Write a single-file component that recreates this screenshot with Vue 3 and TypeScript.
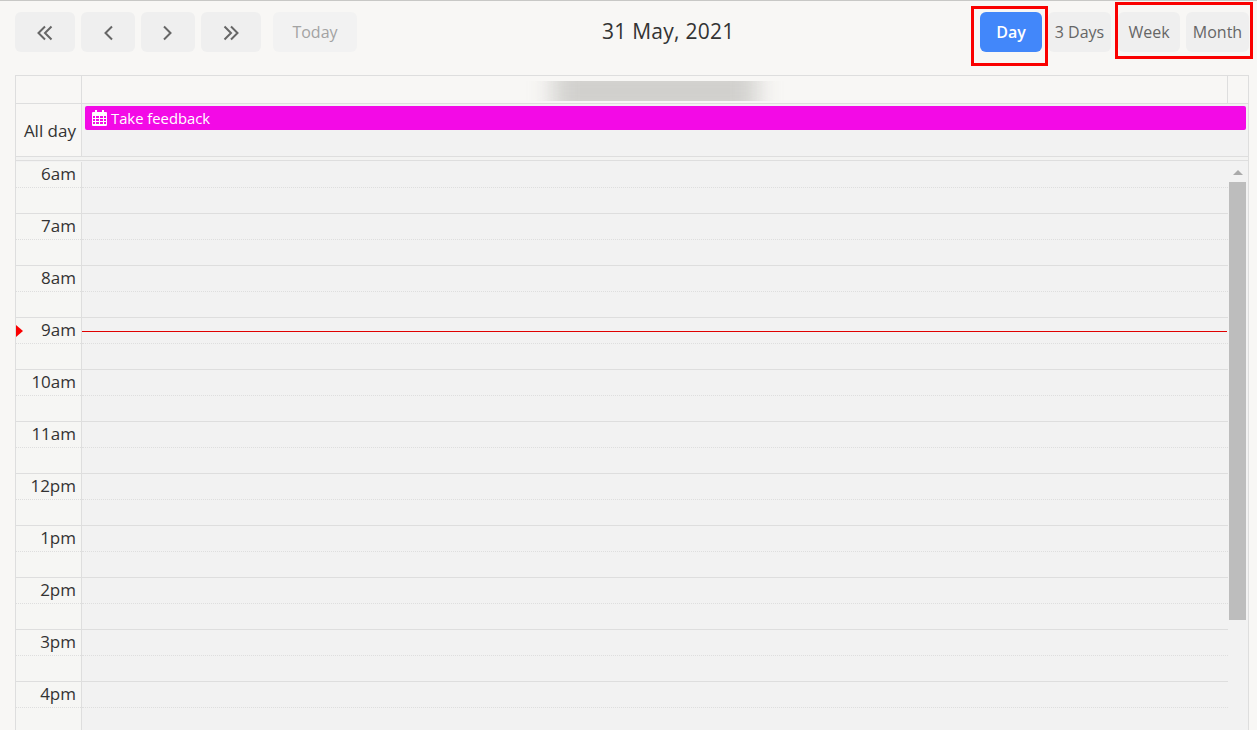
<template>
  <div class="scheduler">
    <header class="toolbar">
      <div class="nav">
        <button v-for="b in navButtons" :key="b.name" class="btn icon" :class="b.name">
          <svg width="20" height="20" viewBox="0 0 20 20" fill="none" stroke="#666" stroke-width="2">
            <path v-for="d in b.paths" :key="d" :d="d" />
          </svg>
        </button>
        <button class="btn today">Today</button>
      </div>
      <div class="title">31 May, 2021</div>
      <div class="views">
        <button class="btn view active">Day</button>
        <button class="btn view wide">3 Days</button>
        <button class="btn view week">Week</button>
        <button class="btn view wide">Month</button>
        <span class="mark mark-day"></span>
        <span class="mark mark-rest"></span>
      </div>
    </header>

    <section class="grid">
      <div class="head-row">
        <div class="time-col"></div>
        <div class="head-day">
          <div class="blur-clip"><span class="blur"></span></div>
        </div>
        <div class="head-gutter"></div>
      </div>
      <div class="allday-row">
        <div class="time-col allday-label">All day</div>
        <div class="allday-body">
          <div class="event">
            <svg width="15" height="16" viewBox="0 0 15 16" fill="#fff">
              <path d="M3 0h2v2h5V0h2v2h2a1 1 0 0 1 1 1v12a1 1 0 0 1-1 1H1a1 1 0 0 1-1-1V3a1 1 0 0 1 1-1h2zM1 6v2h2V6zm3 0v2h3V6zm4 0v2h3V6zm4 0v2h2V6zM1 9v2h2V9zm3 0v2h3V9zm4 0v2h3V9zm4 0v2h2V9zM1 12v2h2v-2zm3 0v2h3v-2zm4 0v2h3v-2zm4 0v2h2v-2z" fill-rule="evenodd" />
            </svg>
            <span>Take feedback</span>
          </div>
        </div>
      </div>
      <div class="divider"></div>
      <div class="body">
        <div class="hours">
          <div v-for="h in hours" :key="h" class="hour">
            <div class="time-col hour-label">{{ h }}</div>
            <div class="hour-cell"></div>
          </div>
          <div class="now-line"></div>
          <div class="now-arrow"></div>
        </div>
        <div class="scrollbar">
          <div class="scroll-up"></div>
          <div class="scroll-thumb"></div>
        </div>
      </div>
    </section>
  </div>
</template>

<script setup lang="ts">
const navButtons = [
  { name: 'first', paths: ['M10 4.5 3.5 11l6.5 6.5', 'M16.5 4.5 10 11l6.5 6.5'] },
  { name: 'prev', paths: ['M14 4.5 7.5 11l6.5 6.5'] },
  { name: 'next', paths: ['M6 4.5l6.5 6.5L6 17.5'] },
  { name: 'last', paths: ['M3.5 4.5 10 11l-6.5 6.5', 'M10 4.5l6.5 6.5-6.5 6.5'] },
]

const hours = ['6am', '7am', '8am', '9am', '10am', '11am', '12pm', '1pm', '2pm', '3pm', '4pm']
</script>

<style>
html,
body {
  margin: 0;
  height: 100%;
  overflow: hidden;
  background: #f8f7f5;
}
</style>

<style scoped>
.scheduler {
  height: 730px;
  overflow: hidden;
  box-sizing: border-box;
  border-top: 1px solid #c8c8c6;
  background: #f8f7f5;
  font-family: "Open Sans", sans-serif;
  color: #333;
}

.toolbar {
  display: flex;
  align-items: center;
  height: 40px;
  margin: 11px 8px 23px 15px;
  position: relative;
}

.nav,
.views {
  display: flex;
  gap: 6px;
}

.views {
  margin-left: auto;
  position: relative;
}

.btn {
  height: 40px;
  padding: 0;
  border: none;
  border-radius: 6px;
  background: #efefef;
  font-family: inherit;
  font-size: 16px;
  color: #666;
}

.icon {
  width: 54px;
  display: flex;
  align-items: center;
  justify-content: center;
}

.first,
.last {
  width: 60px;
}

.today {
  width: 84px;
  margin-left: 6px;
  background: #f2f2f2;
  color: #a3a3a3;
}

.title {
  position: absolute;
  left: 587px;
  top: 5px;
  font-size: 21px;
  line-height: 28px;
  letter-spacing: 0.25px;
  color: #333;
}

.view {
  width: 62px;
}

.view.wide {
  width: 63px;
}

.view.week {
  margin-left: 1px;
}

.view.active {
  background: #4287fa;
  color: #fff;
  font-weight: 600;
}

.mark {
  position: absolute;
  border: 3px solid #fa0000;
  box-sizing: border-box;
  pointer-events: none;
}

.mark-day {
  left: -9px;
  top: -6px;
  width: 77px;
  height: 60px;
}

.mark-rest {
  left: 135px;
  top: -10px;
  width: 138px;
  height: 57px;
}

.grid {
  margin: 0 8px 0 15px;
  border: 1px solid #dedede;
  border-bottom: none;
}

.time-col {
  width: 66px;
  flex: none;
  box-sizing: border-box;
  border-right: 1px solid #dedede;
}

.head-row {
  display: flex;
  height: 27px;
  border-bottom: 1px solid #dedede;
}

.head-day {
  flex: 1;
  display: flex;
  justify-content: center;
  padding-top: 5px;
  border-right: 1px solid #dedede;
}

.head-gutter {
  width: 20px;
}

.blur-clip {
  width: 270px;
  height: 20px;
  overflow: hidden;
  display: flex;
  justify-content: center;
  align-items: center;
}

.blur {
  width: 204px;
  height: 60px;
  flex: none;
  background: #d1d0cd;
  filter: blur(12px);
}

.allday-row {
  display: flex;
  height: 52px;
  border-bottom: 1px solid #dedede;
}

.allday-label {
  display: flex;
  align-items: center;
  justify-content: flex-end;
  padding-right: 5px;
  font-size: 17px;
  color: #333;
  background: #f8f7f5;
}

.allday-body {
  flex: 1;
  background: #f2f2f2;
  padding: 2px 2px 0 3px;
}

.event {
  display: flex;
  align-items: center;
  gap: 4px;
  height: 24px;
  padding-left: 7px;
  border-radius: 2px;
  background: #f30ae6;
  color: #fff;
  font-size: 14.8px;
  font-weight: 500;
}

.divider {
  height: 3px;
  background: #f3f3f2;
  border-bottom: 1px solid #dedede;
}

.body {
  display: flex;
  background: #f2f2f2;
}

.hours {
  flex: 1;
  position: relative;
}

.hour {
  display: flex;
  height: 52px;
  box-sizing: border-box;
  border-top: 1px solid #dedede;
}

.hour:first-child {
  border-top-color: transparent;
}

.hour-label {
  padding-right: 5px;
  text-align: right;
  font-size: 17px;
  line-height: 24px;
  color: #333;
  background: #f6f6f4;
}

.hour-label,
.hour-cell {
  position: relative;
}

.hour-label::after,
.hour-cell::after {
  content: "";
  position: absolute;
  left: 0;
  right: 0;
  top: 25px;
  border-bottom: 1px dotted #dedede;
}

.hour-cell {
  flex: 1;
}

.now-line {
  position: absolute;
  left: 66px;
  right: 1px;
  top: 170px;
  height: 1px;
  background: #e00000;
}

.now-arrow {
  position: absolute;
  left: 0;
  top: 164px;
  border-left: 7px solid #fa0000;
  border-top: 6px solid transparent;
  border-bottom: 6px solid transparent;
}

.scrollbar {
  width: 20px;
  flex: none;
  padding-left: 1px;
  box-sizing: border-box;
}

.scroll-up {
  width: 0;
  margin: 9px 0 0 4px;
  border-left: 5px solid transparent;
  border-right: 5px solid transparent;
  border-bottom: 5px solid #aaa;
}

.scroll-thumb {
  width: 17px;
  height: 438px;
  margin-top: 7px;
  background: #bdbdbd;
}
</style>
